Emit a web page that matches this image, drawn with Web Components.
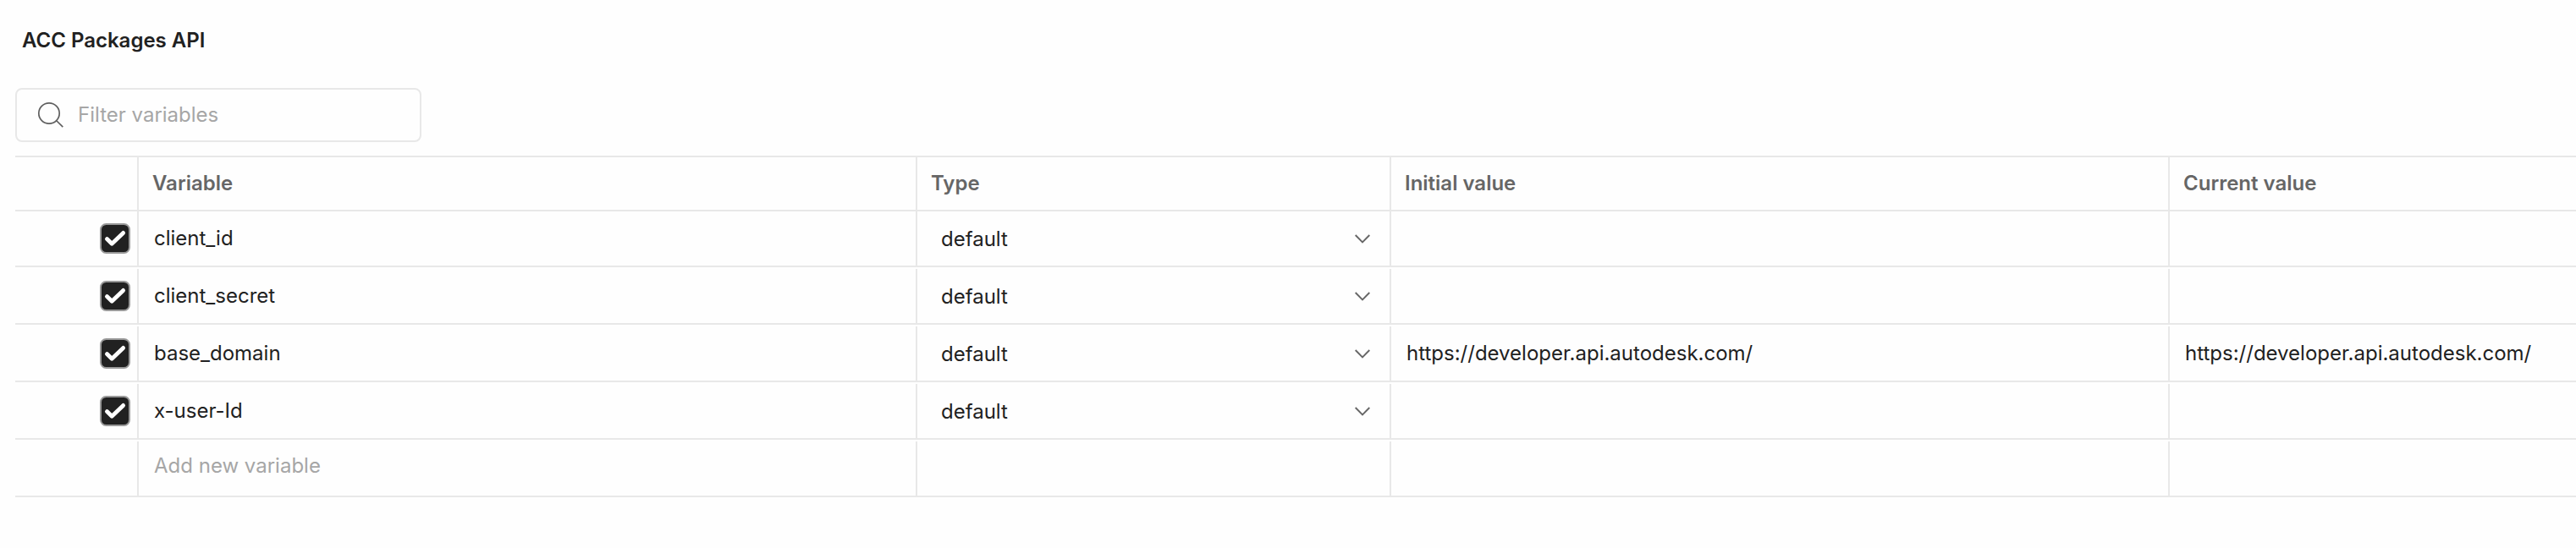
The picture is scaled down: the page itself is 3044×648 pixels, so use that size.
<!DOCTYPE html>
<html lang="en">
<head>
<meta charset="utf-8">
<title>ACC Packages API</title>
<style>
html,body{margin:0;background:#fefefe}
body{height:648px;overflow:hidden;font:400 24px/32px Inter,"Liberation Sans",sans-serif;color:#212121}
</style>
</head>
<body>
<env-editor></env-editor>
<script>
const define = (name, html) => customElements.define(name, class extends HTMLElement {
  constructor() {
    super();
    this.attachShadow({ mode: "open" }).innerHTML = html;
  }
});

define("search-field", `<style>
:host{display:flex;align-items:center;box-sizing:border-box;width:480px;height:64px;border:2px solid #e8e8e8;border-radius:8px;padding-left:24px;color:#a6a6a6}
svg{display:block;width:32px;height:32px;margin-right:16px}
</style>
<svg viewBox="0 0 32 32" fill="none" stroke="#5f5f5f" stroke-width="1.7"><circle cx="14" cy="14" r="12.2"/><path d="M22.5 22.5 30.3 30.1"/></svg>
<slot></slot>`);

define("check-box", `<style>
:host{display:block;width:36px;height:36px}
svg{display:block}
</style>
<svg width="36" height="36" viewBox="0 0 36 36"><rect x="1" y="1" width="34" height="34" rx="6.5" fill="#212121" stroke="#999" stroke-width="2"/><path d="M8.4 18.6 14.2 24.2 27.6 11.4" fill="none" stroke="#fff" stroke-width="4.8" stroke-linecap="round" stroke-linejoin="round"/></svg>`);

define("type-select", `<style>
:host{display:flex;flex:1;align-items:center;justify-content:space-between;padding:0 23px 0 10px}
svg{display:block}
</style>
<slot></slot>
<svg width="18" height="12" viewBox="0 0 18 12" fill="none" stroke="#666" stroke-width="1.9"><path d="M.7 1 9 9.4 17.3 1"/></svg>`);

define("var-row", `<style>
:host{display:grid;grid-template-columns:144px 920px 560px 920px 1fr;padding-top:2px;box-sizing:border-box;height:68px;border-bottom:2px solid #e8e8e8}
:host([first]){height:66px;padding-top:0}
:host([head]){height:64px;padding-top:0;font-weight:600;color:#666}
div{display:flex;align-items:center;padding-left:18px;border-left:2px solid #e8e8e8}
.c{border:0;justify-content:flex-end;padding:0 8px 0 0}
.t{padding-top:2px}
:host([new]) .p{padding-bottom:6px;color:#a6a6a6}
:host([head]) div{padding:0 0 0 16px}
</style>
<div class="c"><slot name="check"></slot></div><div class="p"><slot name="name"></slot></div><div class="t"><slot name="type"></slot></div><div class="p"><slot name="initial"></slot></div><div class="p"><slot name="current"></slot></div>`);

define("env-editor", `<style>
:host{display:block;padding:32px 0 0 18px}
h1{margin:0 0 40px 8px;font:600 24px/32px Inter,"Liberation Sans",sans-serif}
section{margin-top:16px;border-top:2px solid #e8e8e8}
</style>
<h1>ACC Packages API</h1>
<search-field>Filter variables</search-field>
<section>
<var-row head><span slot="name">Variable</span><span slot="type">Type</span><span slot="initial">Initial value</span><span slot="current">Current value</span></var-row>
<var-row first><check-box slot="check"></check-box><span slot="name">client_id</span><type-select slot="type">default</type-select></var-row>
<var-row><check-box slot="check"></check-box><span slot="name">client_secret</span><type-select slot="type">default</type-select></var-row>
<var-row><check-box slot="check"></check-box><span slot="name">base_domain</span><type-select slot="type">default</type-select><span slot="initial">https://developer.api.autodesk.com/</span><span slot="current">https://developer.api.autodesk.com/</span></var-row>
<var-row><check-box slot="check"></check-box><span slot="name">x-user-Id</span><type-select slot="type">default</type-select></var-row>
<var-row new><span slot="name">Add new variable</span></var-row>
</section>`);
</script>
</body>
</html>
